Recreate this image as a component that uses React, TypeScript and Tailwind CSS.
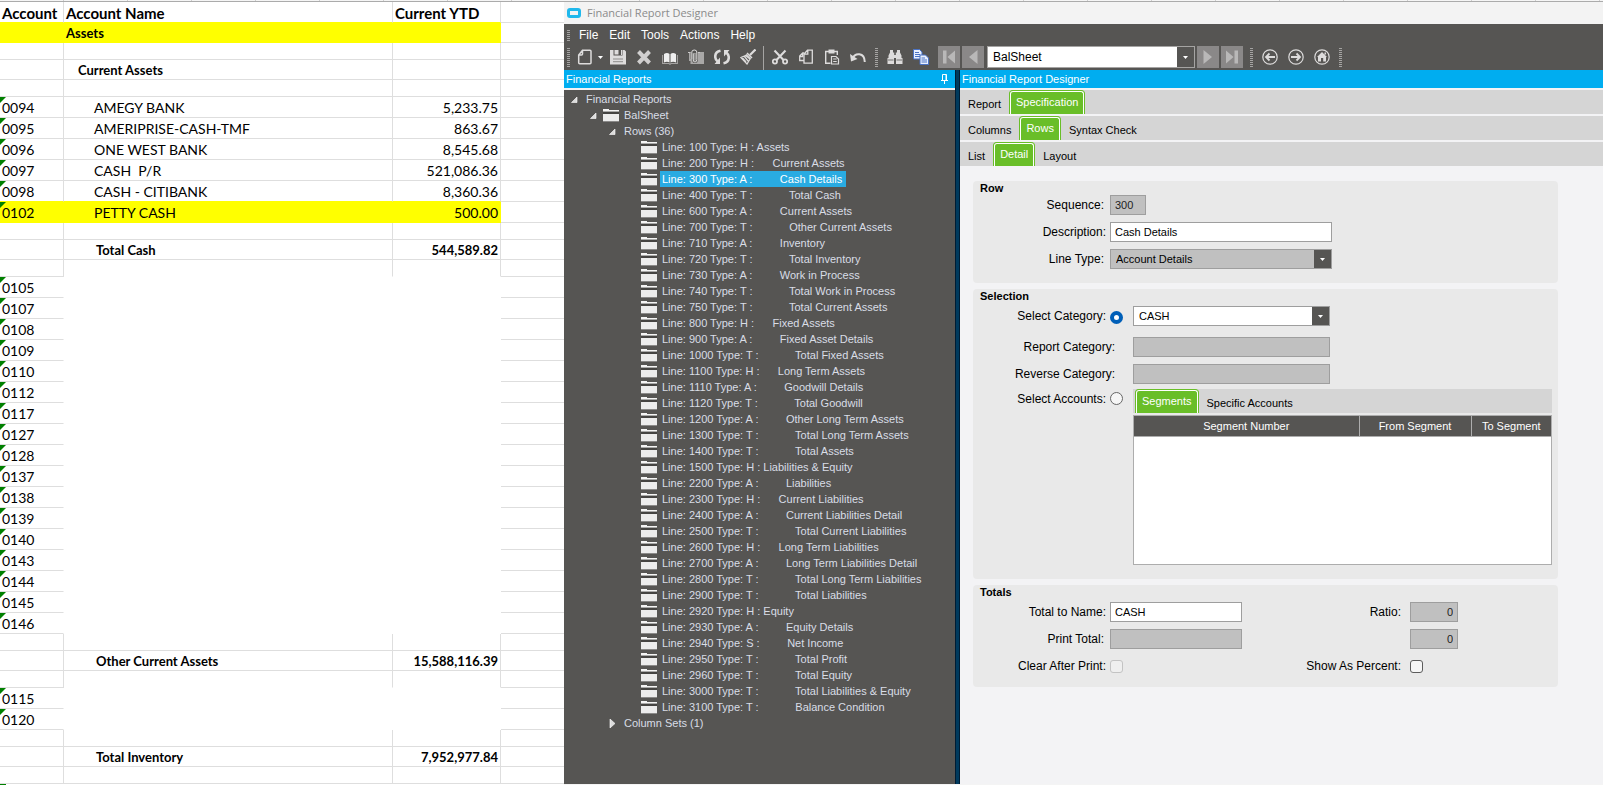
import type { ReactNode } from 'react';
import clsx from 'clsx';

type SheetRow = {
  account?: string;
  name?: string;
  amount?: string;
  kind: 'header' | 'blank' | 'title' | 'section' | 'account' | 'total' | 'masked';
  fill?: boolean;
};

const blank: SheetRow = { kind: 'blank' };

const masked = (accounts: string[]): SheetRow[] => accounts.map((account) => ({ kind: 'masked', account }));

const sheetRows: SheetRow[] = [
  { kind: 'header', account: 'Account', name: 'Account Name', amount: 'Current YTD' },
  { kind: 'title', name: 'Assets', fill: true },
  blank,
  { kind: 'section', name: 'Current Assets' },
  blank,
  { kind: 'account', account: '0094', name: 'AMEGY BANK', amount: '5,233.75' },
  { kind: 'account', account: '0095', name: 'AMERIPRISE-CASH-TMF', amount: '863.67' },
  { kind: 'account', account: '0096', name: 'ONE WEST BANK', amount: '8,545.68' },
  { kind: 'account', account: '0097', name: 'CASH  P/R', amount: '521,086.36' },
  { kind: 'account', account: '0098', name: 'CASH - CITIBANK', amount: '8,360.36' },
  { kind: 'account', account: '0102', name: 'PETTY CASH', amount: '500.00', fill: true },
  blank,
  { kind: 'total', name: 'Total Cash', amount: '544,589.82' },
  blank,
  ...masked([
    '0105', '0107', '0108', '0109', '0110', '0112', '0117', '0127', '0128',
    '0137', '0138', '0139', '0140', '0143', '0144', '0145', '0146',
  ]),
  blank,
  { kind: 'total', name: 'Other Current Assets', amount: '15,588,116.39' },
  blank,
  ...masked(['0115', '0120']),
  blank,
  { kind: 'total', name: 'Total Inventory', amount: '7,952,977.84' },
  blank,
];

const rowHeight = {
  header: 'h-[21px]',
  blank: 'h-[17px]',
  title: 'h-5',
  section: 'h-5',
  account: 'h-[21px]',
  total: 'h-5',
  masked: 'h-[21px]',
};

const rowText = {
  header: 'text-[15px] font-bold',
  blank: 'text-[14px]',
  title: 'text-[13px] font-bold',
  section: 'text-[13px] font-bold',
  account: 'text-[14px]',
  total: 'text-[13px] font-bold',
  masked: 'text-[14px]',
};

const cellTop = {
  header: 'pt-0.5',
  blank: 'pt-0',
  title: 'pt-0',
  section: 'pt-0',
  account: 'pt-0.5',
  total: 'pt-0',
  masked: 'pt-0.5',
};

const nameIndent = {
  header: 'pl-0.5',
  blank: '',
  title: 'pl-0.5',
  section: 'pl-3.5',
  account: 'pl-[30px]',
  total: 'pl-8',
  masked: '',
};

// [line number, type, description]
const reportLines: [number, string, string][] = [
  [100, 'H', 'Assets'],
  [200, 'H', '     Current Assets'],
  [300, 'A', '        Cash Details'],
  [400, 'T', '           Total Cash'],
  [600, 'A', '        Current Assets'],
  [700, 'T', '           Other Current Assets'],
  [710, 'A', '        Inventory'],
  [720, 'T', '           Total Inventory'],
  [730, 'A', '        Work in Process'],
  [740, 'T', '           Total Work in Process'],
  [750, 'T', '           Total Current Assets'],
  [800, 'H', '     Fixed Assets'],
  [900, 'A', '        Fixed Asset Details'],
  [1000, 'T', '           Total Fixed Assets'],
  [1100, 'H', '     Long Term Assets'],
  [1110, 'A', '        Goodwill Details'],
  [1120, 'T', '           Total Goodwill'],
  [1200, 'A', '        Other Long Term Assets'],
  [1300, 'T', '           Total Long Term Assets'],
  [1400, 'T', '           Total Assets'],
  [1500, 'H', 'Liabilities & Equity'],
  [2200, 'A', '        Liabilities'],
  [2300, 'H', '     Current Liabilities'],
  [2400, 'A', '        Current Liabilities Detail'],
  [2500, 'T', '           Total Current Liabilities'],
  [2600, 'H', '     Long Term Liabilities'],
  [2700, 'A', '        Long Term Liabilities Detail'],
  [2800, 'T', '           Total Long Term Liabilities'],
  [2900, 'T', '           Total Liabilities'],
  [2920, 'H', 'Equity'],
  [2930, 'A', '        Equity Details'],
  [2940, 'S', '        Net Income'],
  [2950, 'T', '           Total Profit'],
  [2960, 'T', '           Total Equity'],
  [3000, 'T', '           Total Liabilities & Equity'],
  [3100, 'T', '           Balance Condition'],
];

function Spreadsheet() {
  return (
    <section className="w-[564px] shrink-0 bg-white font-['Lato',sans-serif] text-black">
      <table className="w-full table-fixed border-separate border-spacing-0">
        <colgroup>
          <col className="w-16" />
          <col className="w-[329px]" />
          <col className="w-[108px]" />
          <col />
        </colgroup>
        <tbody>
          {sheetRows.map((row, i) => {
            const next = sheetRows[i + 1];
            const hidden = row.kind === 'masked';
            const bottom = row.fill || next?.fill ? 'border-b-[#ffff00]' : 'border-b-[#dedede]';
            const right = row.fill ? 'border-r-[#ffff00]' : hidden ? 'border-r-transparent' : 'border-r-[#dedede]';
            const hiddenBottom = hidden || next?.kind === 'masked' ? 'border-b-transparent' : bottom;
            const cell = clsx('border-r border-b pb-0', cellTop[row.kind], right);
            return (
              <tr key={i} className={clsx('leading-4 whitespace-pre', rowText[row.kind], row.fill && 'bg-[#ffff00]')}>
                <td className={clsx('relative pr-0 pl-0.5', cell, rowHeight[row.kind], bottom)}>
                  {row.account && row.kind !== 'header' && (
                    <span className="absolute top-0 left-0 size-1.5 bg-[#008000] [clip-path:polygon(0_0,100%_0,0_100%)]" />
                  )}
                  <span className="relative">{row.account}</span>
                </td>
                <td className={clsx('pr-0', cell, nameIndent[row.kind], hiddenBottom)}>{row.name}</td>
                <td className={clsx('px-0.5', cell, row.kind === 'header' ? 'text-left' : 'text-right', hiddenBottom)}>
                  {row.amount}
                </td>
                <td className="border-b border-b-[#dedede] bg-white p-0" />
              </tr>
            );
          })}
        </tbody>
      </table>
      <div className="h-1 w-1.5 bg-[#008000]" />
    </section>
  );
}

function Grip({ className }: { className: string }) {
  return (
    <span
      className={clsx(
        'w-[3px] shrink-0 bg-[repeating-linear-gradient(180deg,#a5a4a3_0px,#a5a4a3_1px,transparent_1px,transparent_2px)]',
        className
      )}
    />
  );
}

function Icon({ children }: { children: ReactNode }) {
  return (
    <svg viewBox="0 0 16 16" className="size-4" fill="none" stroke="#dddcdc" strokeWidth="1.5" aria-hidden="true">
      {children}
    </svg>
  );
}

function ToolButton({ label, children }: { label: string; children: ReactNode }) {
  return (
    <button type="button" title={label} aria-label={label} className="flex h-[22px] w-[26px] shrink-0 items-center justify-center">
      <Icon>{children}</Icon>
    </button>
  );
}

function NavButton({ label, children }: { label: string; children: ReactNode }) {
  return (
    <button
      type="button"
      title={label}
      aria-label={label}
      className="flex size-[22px] shrink-0 items-center justify-center bg-[#8a8888]"
    >
      <Icon>
        <g fill="#b9b8b8" stroke="none">
          {children}
        </g>
      </Icon>
    </button>
  );
}

function Caret() {
  return (
    <svg viewBox="0 0 5 3" className="h-[3px] w-[5px]" fill="#fff" aria-hidden="true">
      <path d="M0 0h5L2.500 3z" />
    </svg>
  );
}

function Toolbar() {
  return (
    <div className="flex h-6 items-center pb-0.5 pl-[3px]">
      <Grip className="h-[19px]" />
      <div className="ml-0.5 flex items-center">
        <ToolButton label="New">
          <path d="M5.500 1.200h7.500q1 0 1 1v11.600q0 1-1 1H2.700q-1 0-1-1V6zM2 6h2.500q1 0 1-1V1.500" />
        </ToolButton>
        <button type="button" aria-label="New options" className="flex h-[22px] w-[7px] items-center">
          <Caret />
        </button>
        <ToolButton label="Save">
          <path d="M0 1h3.500v5.500h9V1H14.500L16 2.500V15.500H0z" fill="#dddcdc" stroke="none" />
          <path d="M4.500 1h4v4.500h-4zM11 1h1v5h-1z" fill="#dddcdc" stroke="none" />
          <path d="M3 10h10M3 12.700h10" stroke="#8d8c8b" strokeWidth="1" />
        </ToolButton>
        <ToolButton label="Delete">
          <path d="M2.500 2.500l11 11.500M13.500 2.500L2.500 14" stroke="#d0cfcf" strokeWidth="4" />
        </ToolButton>
        <ToolButton label="Book">
          <path d="M2 5c2-1.500 4-1.500 5.500 0v8.500C6 12.500 4 12.500 2 13.500zM8.500 5C10 3.500 12 3.500 14 5v8.500c-2-1-4-1-5.500 0z" fill="#efefef" stroke="none" />
          <path d="M.6 6v8.500h6.400l1 .8 1-.8h6.400V6" stroke="#a5a4a3" strokeWidth="1.100" />
        </ToolButton>
        <ToolButton label="Attachments">
          <path d="M1 4h10l1-1h4v12H2.500v-3H1z" fill="#a9a8a7" stroke="none" />
          <path d="M0 3.500h3.500M9 3.500h3" stroke="#c9c8c8" strokeWidth="1.200" />
          <path d="M3.800 10V3Q3.800 1 6.300 1t2.500 2v7.500Q8.800 13 7 13t-1.700-2V4.500" stroke="#565553" strokeWidth="2.200" />
          <path d="M3.800 10V3Q3.800 1 6.300 1t2.500 2v7.500Q8.800 13 7 13t-1.700-2V4.500" strokeWidth="1" />
        </ToolButton>
        <ToolButton label="Refresh">
          <path d="M6.500 1.800C3 2.500 1 5 1.300 8.300c.2 1.800 1 3 2.200 4M9.500 14.200c3.500-.7 5.500-3.200 5.200-6.500-.2-1.800-1-3-2.200-4" strokeWidth="2.600" />
          <path d="M6 8.500v6.500H.5zM10 7.500V1h5.500z" fill="#dddcdc" stroke="none" />
        </ToolButton>
        <ToolButton label="Clear">
          <path d="M15.500.5L10 6" strokeWidth="2.200" />
          <path d="M7 4l5 5M6 5.500l4.500 4.500" strokeWidth="1.500" />
          <path d="M5.500 6.500L.8 8.500 7 15l3-5zM2.500 9l3.500 4M4.500 7.500L8 12" strokeWidth="1.300" />
        </ToolButton>
      </div>
      <span className="-mb-0.5 ml-0.5 h-6 w-px bg-[#a5a4a3]" />
      <div className="ml-[3px] flex items-center">
        <ToolButton label="Cut">
          <path d="M2.500 1.500l9 9.500M13.500 1.500l-9 9.500" strokeWidth="2.100" />
          <circle cx="2.900" cy="12.500" r="2.100" strokeWidth="1.800" />
          <circle cx="13.100" cy="12.500" r="2.100" strokeWidth="1.800" />
        </ToolButton>
        <ToolButton label="Copy">
          <path d="M6 11.500H1.700V7l3-3H6M1.700 7.500h3V4.500" strokeWidth="1.300" />
          <path d="M9.500 1.200h4.800v13H6V5zM6.300 5.200h3.500V1.500" strokeWidth="1.300" />
        </ToolButton>
        <ToolButton label="Paste">
          <path d="M6.500 14.300H1.700V2.500h11.600V6" strokeWidth="1.400" />
          <path d="M4.500.5h6v4h-6z" fill="#dddcdc" stroke="none" />
          <path d="M7.500 7.500h4.500l2.500 2.500v5h-7zM9.200 10h3.500M9.200 12.500h3.500" strokeWidth="1.200" />
        </ToolButton>
        <ToolButton label="Undo">
          <path d="M2.500 9.500C5 3.500 14.500 3 14.800 13" strokeWidth="2" />
          <path d="M0 5l1 7.500L7.500 10z" fill="#dddcdc" stroke="none" />
        </ToolButton>
      </div>
      <Grip className="mr-1 ml-1 h-[19px]" />
      <div className="flex items-center">
        <ToolButton label="Find">
          <path d="M3 1h3v2.500h1.200V6h1.600V3.500H10V1h3v2.500l1.500 3V9h1V15H9V9H7v6H.5V9h1V6.500L3 3.500z" fill="#dddcdc" stroke="none" />
          <path d="M1 11h5.500M9.500 11H15" stroke="#737271" strokeWidth="1" />
        </ToolButton>
        <ToolButton label="Copy report">
          <path d="M.5.5h6l2.500 2.500v7H.5z" fill="#e8f0ff" stroke="#4a72c4" strokeWidth="1" />
          <path d="M2 3.500h4M2 5.500h5M2 7.500h5" stroke="#4a72c4" strokeWidth="1" />
          <path d="M7 6h5.500L15.500 9v6.500H7z" fill="#e8f0ff" stroke="#4a72c4" strokeWidth="1" />
          <path d="M8.500 9h3.500M8.500 11h5.500M8.500 13h5.500" stroke="#4a72c4" strokeWidth="1" />
        </ToolButton>
      </div>
      <div className="ml-1 flex items-center gap-0.5">
        <NavButton label="First">
          <path d="M2 1.500h3.500v13H2zM14 1.500v13L6.500 8z" />
        </NavButton>
        <NavButton label="Previous">
          <path d="M12.500 1v14L4 8z" />
        </NavButton>
        <div className="relative ml-px">
          <select
            aria-label="Report"
            className="block h-[22px] w-52 appearance-none border border-[#a5a4a3] bg-white pr-5 pl-[5px] text-[12px] leading-5 text-black"
          >
            <option>BalSheet</option>
          </select>
          <span className="pointer-events-none absolute top-px right-px flex h-5 w-[17px] items-center justify-center bg-[#565553]">
            <Caret />
          </span>
        </div>
        <NavButton label="Next">
          <path d="M3.500 1v14L12 8z" />
        </NavButton>
        <NavButton label="Last">
          <path d="M10.500 1.500H14v13h-3.500zM2 1.500v13L9.500 8z" />
        </NavButton>
      </div>
      <Grip className="mr-1 ml-[7px] h-[19px]" />
      <ToolButton label="Back">
        <circle cx="8" cy="8" r="7.200" strokeWidth="1.200" />
        <path d="M13 8H5M7.500 4.500L4 8l3.500 3.500" strokeWidth="1.800" />
      </ToolButton>
      <ToolButton label="Forward">
        <circle cx="8" cy="8" r="7.200" strokeWidth="1.200" />
        <path d="M3 8h8M8.500 4.500L12 8l-3.500 3.500" strokeWidth="1.800" />
      </ToolButton>
      <ToolButton label="Home">
        <circle cx="8" cy="8" r="7.200" strokeWidth="1.200" />
        <path d="M8 3l5 5h-1v4.500H9.200V9H7v3.500H4V8H3zM10.500 3.500h1.500v2h-1.500z" fill="#dddcdc" stroke="none" />
      </ToolButton>
      <Grip className="ml-1 h-[19px]" />
    </div>
  );
}

function Folder() {
  return (
    <svg viewBox="0 0 16 14" className="h-3.5 w-4 shrink-0" shapeRendering="crispEdges" aria-hidden="true">
      <path d="M0 1h6v1h10v1H0z" fill="#f4f4f4" />
      <path d="M0 3h16v1H0z" fill="#a9a9a8" />
      <path d="M0 4h16v2H0z" fill="#454442" />
      <path d="M0 6h16v7H0z" fill="#ececec" />
      <path d="M0 13h16v1H0z" fill="#8a8988" />
    </svg>
  );
}

function Arrow({ open }: { open?: boolean }) {
  return (
    <svg viewBox="0 0 7 9" className="h-[9px] w-[7px] shrink-0" aria-hidden="true">
      {open ? (
        <path d="M.5 7.500h5.500V2z" fill="#dcdcdc" stroke="#fff" strokeWidth=".6" />
      ) : (
        <path d="M1 0v9l5-4.500z" fill="#dcdcdc" stroke="#fff" strokeWidth=".6" />
      )}
    </svg>
  );
}

function ReportTree() {
  return (
    <aside className="flex w-[391px] shrink-0 flex-col bg-[#565553] text-[11px] text-[#d9dde6]">
      <header className="flex h-[18px] shrink-0 items-center justify-between bg-[#00adf0] pr-1.5 pl-0.5 text-white">
        <h2>Financial Reports</h2>
        <button type="button" aria-label="Pin">
          <svg viewBox="0 0 8 10" className="h-2.5 w-2" fill="none" stroke="#fff" aria-hidden="true">
            <path d="M1.500 6V.5h4V6M5 .5V6M0 6.500h7M3.500 7v3" />
          </svg>
        </button>
      </header>
      <ul className="flex-1 border-t-2 border-[#f3f3f5] pt-px leading-4">
        <li className="flex h-4 items-center gap-2 pl-[7px]">
          <Arrow open />
          <span>Financial Reports</span>
        </li>
        <li className="flex h-4 items-center pl-[26px]">
          <Arrow open />
          <span className="flex items-center gap-[5px] pl-1.5">
            <Folder />
            BalSheet
          </span>
        </li>
        <li className="flex h-4 items-center gap-2 pl-[45px]">
          <Arrow open />
          <span>Rows (36)</span>
        </li>
        {reportLines.map(([line, type, text]) => (
          <li key={line} className="flex h-4 items-center gap-[3px] pl-[77px]">
            <Folder />
            <button
              type="button"
              className={clsx('px-0.5 leading-4 whitespace-pre', line === 300 && 'bg-[#29abe2] pr-1 text-white')}
            >
              {`Line: ${line} Type: ${type} : ${text}`}
            </button>
          </li>
        ))}
        <li className="flex h-4 items-center gap-2 pl-[45px]">
          <Arrow />
          <span>Column Sets (1)</span>
        </li>
      </ul>
    </aside>
  );
}

function TabBar({ tabs, active, className }: { tabs: string[]; active: string; className?: string }) {
  return (
    <div role="tablist" className={clsx('flex h-6 items-stretch bg-[#d5d5d5] text-[11px]', className)}>
      {tabs.map((tab) =>
        tab === active ? (
          <button
            key={tab}
            type="button"
            role="tab"
            aria-selected="true"
            className="rounded-t border border-b-0 border-[#69be28] bg-[#69be28] text-white"
          >
            <span className="flex h-full items-center rounded-t-[3px] border border-b-0 border-white px-[5px] pb-px">{tab}</span>
          </button>
        ) : (
          <button key={tab} type="button" role="tab" aria-selected="false" className="px-2 pt-[5px]">
            {tab}
          </button>
        )
      )}
    </div>
  );
}

function Panel({ title, children, className }: { title: string; children: ReactNode; className?: string }) {
  return (
    <section className={clsx('rounded-[4px] bg-[#e9e9e9]', className)}>
      <h3 className="h-3.5 pl-[7px] text-[11px] leading-3.5 font-bold">{title}</h3>
      {children}
    </section>
  );
}

type SelectBoxProps = { id: string; value: string; className: string; muted?: boolean; label?: string };

function SelectBox({ id, value, className, muted, label }: SelectBoxProps) {
  return (
    <div className={clsx('relative', className)}>
      <select
        id={id}
        aria-label={label}
        disabled={muted}
        className={clsx(
          'block h-5 w-full appearance-none border border-[#9e9e9e] pr-5 pl-[5px] text-[11px] leading-[18px] opacity-100',
          muted ? 'bg-[#c0c0c0]' : 'bg-white'
        )}
      >
        <option>{value}</option>
      </select>
      <span className="pointer-events-none absolute top-px right-px flex h-[18px] w-[17px] items-center justify-center bg-[#565553]">
        <Caret />
      </span>
    </div>
  );
}

const fieldStyle = 'h-5 border border-[#9e9e9e] px-1 text-[11px] leading-[18px]';
const readOnlyStyle = 'bg-[#c0c0c0] text-[#222]';

function RowPanel() {
  return (
    <Panel title="Row" className="pb-3.5">
      <div className="grid auto-rows-[20px] grid-cols-[133px_1fr] items-center gap-x-1 gap-y-[7px]">
        <label htmlFor="sequence" className="pr-0.5 text-right">Sequence:</label>
        <input id="sequence" readOnly defaultValue="300" className={clsx(fieldStyle, readOnlyStyle, 'w-9')} />
        <label htmlFor="description" className="text-right">Description:</label>
        <input id="description" defaultValue="Cash Details" className={clsx(fieldStyle, 'w-[222px] bg-white')} />
        <label htmlFor="lineType" className="pr-0.5 text-right">Line Type:</label>
        <SelectBox id="lineType" value="Account Details" muted className="w-[222px]" />
      </div>
    </Panel>
  );
}

function SelectionPanel() {
  return (
    <Panel title="Selection" className="pr-1.5 pb-3.5">
      <div className="grid grid-cols-[133px_23px_1fr] gap-x-0.5">
        <label htmlFor="byCategory" className="mt-[3px] text-right leading-5">Select Category:</label>
        <input
          id="byCategory"
          type="radio"
          name="selection"
          defaultChecked
          className="mt-2 ml-0.5 size-[13px] appearance-none rounded-full border border-[#666] bg-[#f6f6f6] checked:border-4 checked:border-[#005fb8] checked:bg-white"
        />
        <SelectBox id="category" value="CASH" label="Category" className="mt-[3px] w-[197px]" />

        <label htmlFor="reportCategory" className="col-span-2 mt-[11px] pr-4 text-right leading-5">Report Category:</label>
        <input id="reportCategory" readOnly className={clsx(fieldStyle, readOnlyStyle, 'mt-[11px] w-[197px]')} />

        <label htmlFor="reverseCategory" className="col-span-2 mt-[7px] pr-4 text-right leading-5">Reverse Category:</label>
        <input id="reverseCategory" readOnly className={clsx(fieldStyle, readOnlyStyle, 'mt-[7px] w-[197px]')} />

        <label htmlFor="byAccounts" className="mt-[5px] text-right leading-5">Select Accounts:</label>
        <input
          id="byAccounts"
          type="radio"
          name="selection"
          className="mt-2 ml-0.5 size-[13px] appearance-none rounded-full border border-[#666] bg-[#f6f6f6] checked:border-4 checked:border-[#005fb8]"
        />
        <div className="mt-[5px]">
          <TabBar tabs={['Segments', 'Specific Accounts']} active="Segments" className="pl-0.5" />
          <div className="mt-0.5 h-[150px] border border-[#adadad] bg-white">
            <table className="w-full table-fixed border-collapse text-[11px] text-white">
              <thead>
                <tr className="h-5 border-b border-[#adadad] bg-[#565553]">
                  <th className="border-r border-[#adadad] font-normal">Segment Number</th>
                  <th className="w-28 border-r border-[#adadad] font-normal">From Segment</th>
                  <th className="w-20 font-normal">To Segment</th>
                </tr>
              </thead>
            </table>
          </div>
        </div>
      </div>
    </Panel>
  );
}

function TotalsPanel() {
  return (
    <Panel title="Totals" className="pb-[11px]">
      <div className="mt-[3px] grid auto-rows-[20px] grid-cols-[133px_132px_156px_52px] items-center gap-x-1 gap-y-[7px]">
        <label htmlFor="totalName" className="text-right">Total to Name:</label>
        <input id="totalName" defaultValue="CASH" className={clsx(fieldStyle, 'bg-white')} />
        <label htmlFor="ratio" className="pr-px text-right">Ratio:</label>
        <input id="ratio" readOnly defaultValue="0" className={clsx(fieldStyle, readOnlyStyle, 'ml-1 text-right')} />

        <label htmlFor="printTotal" className="pr-0.5 text-right">Print Total:</label>
        <input id="printTotal" readOnly className={clsx(fieldStyle, readOnlyStyle)} />
        <span />
        <input aria-label="Print total ratio" readOnly defaultValue="0" className={clsx(fieldStyle, readOnlyStyle, 'ml-1 text-right')} />

        <label htmlFor="clearAfter" className="text-right">Clear After Print:</label>
        <input
          id="clearAfter"
          type="checkbox"
          disabled
          className="size-[13px] appearance-none rounded-[3px] border border-[#c3c3c3] bg-[#efefef]"
        />
        <label htmlFor="asPercent" className="pr-px text-right">Show As Percent:</label>
        <input
          id="asPercent"
          type="checkbox"
          className="ml-1 size-[13px] appearance-none rounded-[3px] border border-[#5c5c5c] bg-[#f6f6f6]"
        />
      </div>
    </Panel>
  );
}

function Designer() {
  return (
    <main className="flex min-w-0 flex-1 flex-col bg-[#f3f3f5] text-black">
      <header className="flex h-[18px] shrink-0 items-center bg-[#00adf0] pl-0.5 text-[11px] text-white">
        <h2>Financial Report Designer</h2>
      </header>
      <div className="flex flex-col gap-0.5 pt-0.5">
        <TabBar tabs={['Report', 'Specification']} active="Specification" />
        <TabBar tabs={['Columns', 'Rows', 'Syntax Check']} active="Rows" />
        <TabBar tabs={['List', 'Detail', 'Layout']} active="Detail" />
      </div>
      <div className="flex flex-col gap-1.5 pt-[15px] pr-[45px] pl-[13px] text-[12px]">
        <RowPanel />
        <SelectionPanel />
        <TotalsPanel />
      </div>
    </main>
  );
}

export default function App() {
  return (
    <div className="flex h-screen flex-col overflow-hidden bg-white font-['Liberation_Sans',Arial,sans-serif]">
      <div className="h-0.5 shrink-0 border-b border-[#ababab] bg-[repeating-linear-gradient(90deg,#f5f5f5_0px,#f5f5f5_63px,#cfcfcf_63px,#cfcfcf_64px)]" />
      <div className="flex min-h-0 flex-1">
        <Spreadsheet />
        <div className="flex min-w-0 flex-1 flex-col border-b border-[#f4f4f4]">
          <div className="flex h-[22px] shrink-0 items-center gap-1.5 bg-[#f3f3f3] pl-[3px] font-['Open_Sans',sans-serif] text-[11px] text-[#8b8b8b]">
            <span className="h-2.5 w-3.5 rounded-[3px] border-3 border-[#1fb8ec] bg-[#f3f3f3]" />
            <h1>Financial Report Designer</h1>
          </div>
          <div className="shrink-0 bg-[#565553]">
            <nav className="flex h-[22px] items-center pl-[3px] text-[12px] text-white">
              <Grip className="h-[11px]" />
              <div className="ml-[9px] flex gap-[11px]">
                <button type="button">File</button>
                <button type="button">Edit</button>
                <button type="button">Tools</button>
                <button type="button">Actions</button>
                <button type="button">Help</button>
              </div>
            </nav>
            <Toolbar />
          </div>
          <div className="flex min-h-0 flex-1">
            <ReportTree />
            <div className="w-[5px] shrink-0 border-x border-[#001c33] bg-[#003a5d]" />
            <Designer />
          </div>
        </div>
      </div>
    </div>
  );
}
